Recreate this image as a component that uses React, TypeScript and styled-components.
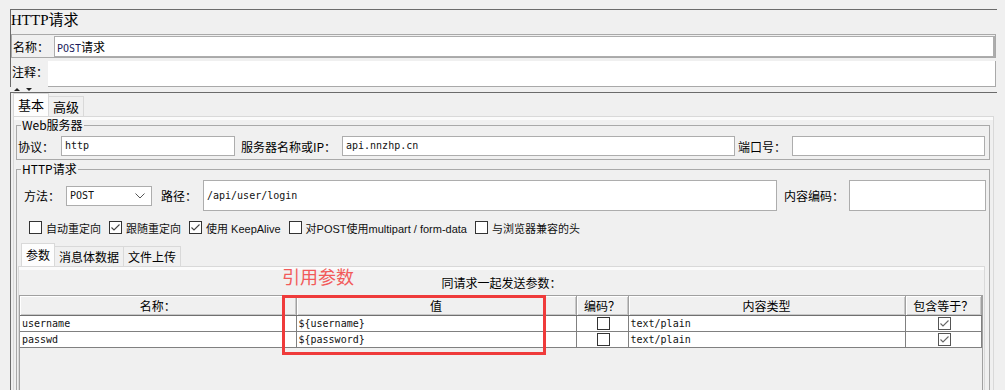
import React from 'react';
import styled, { createGlobalStyle } from 'styled-components';

const CJK = `'Noto Sans CJK SC', sans-serif`;
const SERIF = `'Liberation Serif', 'Noto Sans CJK SC', serif`;
const MONO = `'DejaVu Sans Mono', 'Noto Sans CJK SC', monospace`;
const UI = `'Liberation Sans', 'Noto Sans CJK SC', sans-serif`;

const GlobalStyle = createGlobalStyle`
  html, body {
    margin: 0;
    padding: 0;
    background: #f0f0f0;
  }
  body {
    width: 1005px;
    height: 390px;
    overflow: hidden;
    font-family: ${CJK};
    font-size: 12px;
    color: #000;
  }
`;

const Page = styled.div`
  padding: 9px 8px 0 10px;
`;

const TopPanel = styled.div`
  border-top: 1px solid #6b6b6b;
  border-left: 1px solid #6b6b6b;
`;

const Title = styled.div`
  height: 24px;
  line-height: 20px;
  font-family: ${SERIF};
  font-size: 15px;
`;

const NameRow = styled.div`
  display: flex;
  align-items: flex-start;
  height: 24px;
  box-sizing: border-box;
  border: 1px solid #a9a9a9;
  margin-right: 1px;
  padding-top: 1px;
`;

const RowLabel = styled.div<{ $w: number }>`
  flex: none;
  width: ${({ $w }) => $w}px;
  box-sizing: border-box;
  padding-left: 1px;
  line-height: 21px;
  font-size: 12px;
  white-space: nowrap;
`;

const NameInput = styled.div`
  flex: 1;
  height: 21px;
  box-sizing: border-box;
  border: 1px solid #adadad;
  border-right-width: 2px;
  background: #fff;
  padding-left: 2px;
  line-height: 19px;
  font-size: 12px;
`;

const MonoBit = styled.span`
  font-family: ${MONO};
  font-size: 10px;
  color: #1a1a5a;
`;

const CommentRow = styled.div`
  display: flex;
  height: 29px;
  padding-top: 3px;
  box-sizing: border-box;
  margin-right: 1px;
`;

const CommentArea = styled.div`
  flex: 1;
  background: #fff;
  border-right: 1px solid #a9a9a9;
  border-bottom: 1px solid #a9a9a9;
`;

const Divider = styled.div`
  height: 5px;
  display: flex;
  align-items: flex-start;
  gap: 6px;
  padding-left: 4px;
  overflow: hidden;
`;

const Arrow = styled.span<{ $up?: boolean }>`
  width: 0;
  height: 0;
  margin-top: 1px;
  border-left: 3px solid transparent;
  border-right: 3px solid transparent;
  ${({ $up }) => ($up ? 'border-bottom: 3px solid #222;' : 'border-top: 3px solid #222;')}
`;

const BottomPanel = styled.div`
  border-top: 1px solid #6b6b6b;
  border-left: 1px solid #6b6b6b;
  height: 300px;
`;

const TabBar = styled.div<{ $pad: number }>`
  display: flex;
  align-items: flex-end;
  padding-left: ${({ $pad }) => $pad}px;
`;

const Tab = styled.div<{ $active?: boolean; $size?: number }>`
  height: ${({ $active }) => ($active ? 22 : 19)}px;
  line-height: ${({ $active }) => ($active ? 22 : 19)}px;
  padding: 0 4px;
  font-size: ${({ $size }) => $size ?? 12}px;
  background: ${({ $active }) => ($active ? '#fdfdfd' : '#f0f0f0')};
  border: 1px solid #d9d9d9;
  border-bottom: none;
  margin-right: -1px;
  white-space: nowrap;
`;

const TabPanel = styled.div`
  margin: 0 3px 0 2px;
  border: 1px solid #d9d9d9;
  box-shadow: inset 0 3px 0 #fbfbfb;
  padding: 1px 3px 0 2px;
  height: 280px;
`;

const Group = styled.fieldset`
  margin: 0 0 2px 0;
  padding: 4px 4px 3px 1px;
  border: 1px solid #a9a9a9;
  min-width: 0;
`;

const Legend = styled.legend`
  margin-left: 3px;
  padding: 0 1px;
  line-height: 14px;
  font-size: 12px;
`;

const FieldRow = styled.div`
  display: flex;
  align-items: center;
`;

const FieldLabel = styled.div<{ $w: number; $pad?: number }>`
  flex: none;
  width: ${({ $w }) => $w}px;
  box-sizing: border-box;
  padding-left: ${({ $pad }) => $pad ?? 0}px;
  font-size: 12px;
  white-space: nowrap;
`;

const TextBox = styled.div<{ $w: number; $h: number }>`
  flex: none;
  width: ${({ $w }) => $w}px;
  height: ${({ $h }) => $h}px;
  box-sizing: border-box;
  background: #fff;
  border: 1px solid #adadad;
  padding-left: 3px;
  font-family: ${MONO};
  font-size: 10px;
  line-height: ${({ $h }) => $h - 2}px;
  color: #111;
`;

const SelectBox = styled(TextBox)`
  display: flex;
  justify-content: space-between;
  align-items: center;
  padding-right: 6px;
`;

const CheckRow = styled.div`
  display: flex;
  align-items: center;
  gap: 8px;
  margin-top: 10px;
  padding-left: 11px;
  height: 13px;
`;

const CheckItem = styled.label`
  display: flex;
  align-items: center;
  gap: 4px;
  font-family: ${UI};
  font-size: 11px;
  color: #111;
  white-space: nowrap;
`;

const Box = styled.span<{ $soft?: boolean }>`
  flex: none;
  display: inline-flex;
  align-items: center;
  justify-content: center;
  vertical-align: middle;
  width: 13px;
  height: 13px;
  box-sizing: border-box;
  border: 1px solid ${({ $soft }) => ($soft ? '#555' : '#333')};
  background: #fff;
`;

const SubTabs = styled(TabBar)`
  margin-top: 9px;
`;

const SubPanel = styled.div`
  position: relative;
  border: 1px solid #d9d9d9;
  box-shadow: inset 0 3px 0 #fbfbfb;
  height: 130px;
  padding-top: 9px;
  box-sizing: border-box;
`;

const Caption = styled.div`
  text-align: center;
  line-height: 14px;
  font-size: 12px;
  margin-bottom: 5px;
`;

const Pane = styled.div`
  margin-right: 1px;
  border-left: 1px solid #a0a0a0;
  border-right: 1px solid #a0a0a0;
  height: 100px;
`;

const Grid = styled.table`
  border-collapse: collapse;
  table-layout: fixed;
  width: 100%;
`;

const Head = styled.th`
  height: 19px;
  padding: 0;
  font-weight: normal;
  font-size: 12px;
  line-height: 18px;
  background: #f0f0f0;
  border-top: 1px solid #a0a0a0;
  border-right: 1px solid #a0a0a0;
  border-bottom: 1px solid #707070;
  box-shadow: inset 1px 1px 0 #fff, inset -1px -1px 0 #c8c8c8;
`;

const Cell = styled.td<{ $center?: boolean }>`
  height: 15px;
  padding: 0 0 0 2px;
  background: #fff;
  border-right: 1px solid #808080;
  border-bottom: 1px solid #808080;
  font-family: ${MONO};
  font-size: 10px;
  line-height: ${({ $center }) => ($center ? 0 : '15px')};
  color: #111;
  text-align: ${({ $center }) => ($center ? 'center' : 'left')};
  vertical-align: middle;
`;

const Note = styled.div`
  position: absolute;
  left: 263px;
  top: -2px;
  font-family: 'Noto Sans CJK SC', sans-serif;
  font-size: 18px;
  line-height: 22px;
  color: #f25a5a;
`;

const Highlight = styled.div`
  position: absolute;
  left: 263px;
  top: 28px;
  width: 264px;
  height: 60px;
  box-sizing: border-box;
  border: 3px solid #ef3b3b;
`;

const Tick = ({ color = '#555' }: { color?: string }) => (
  <svg width="11" height="11" viewBox="0 0 11 11">
    <polyline points="1.5,5.5 4,8 9.5,2.5" fill="none" stroke={color} strokeWidth="1.1" />
  </svg>
);

const Check = ({ checked, soft }: { checked?: boolean; soft?: boolean }) => (
  <Box $soft={soft}>{checked && <Tick color={soft ? '#666' : '#444'} />}</Box>
);

const Chevron = () => (
  <svg width="10" height="6" viewBox="0 0 10 6">
    <polyline points="0.5,0.5 5,5 9.5,0.5" fill="none" stroke="#555" strokeWidth="1" />
  </svg>
);

const params = [
  { name: 'username', value: '${username}' },
  { name: 'passwd', value: '${password}' },
];

const options = [
  { label: '自动重定向', checked: false },
  { label: '跟随重定向', checked: true },
  { label: '使用 KeepAlive', checked: true },
  { label: '对POST使用multipart / form-data', checked: false },
  { label: '与浏览器兼容的头', checked: false },
];

export default function App() {
  return (
    <>
      <GlobalStyle />
      <Page>
        <TopPanel>
          <Title>HTTP请求</Title>
          <NameRow>
            <RowLabel $w={42}>名称：</RowLabel>
            <NameInput>
              <MonoBit>POST</MonoBit>请求
            </NameInput>
          </NameRow>
          <CommentRow>
            <RowLabel $w={37}>注释：</RowLabel>
            <CommentArea />
          </CommentRow>
        </TopPanel>
        <Divider>
          <Arrow $up />
          <Arrow />
        </Divider>
        <BottomPanel>
          <TabBar $pad={2}>
            <Tab $active $size={13}>基本</Tab>
            <Tab $size={13}>高级</Tab>
          </TabBar>
          <TabPanel>
            <Group>
              <Legend>Web服务器</Legend>
              <FieldRow>
                <FieldLabel $w={43}>协议：</FieldLabel>
                <TextBox $w={174} $h={20}>http</TextBox>
                <FieldLabel $w={107} $pad={6}>服务器名称或IP：</FieldLabel>
                <TextBox $w={393} $h={20}>api.nnzhp.cn</TextBox>
                <FieldLabel $w={57} $pad={3}>端口号：</FieldLabel>
                <TextBox $w={193} $h={20} />
              </FieldRow>
            </Group>
            <Group>
              <Legend>HTTP请求</Legend>
              <FieldRow>
                <FieldLabel $w={48} $pad={6}>方法：</FieldLabel>
                <SelectBox $w={86} $h={20}>
                  POST
                  <Chevron />
                </SelectBox>
                <FieldLabel $w={51} $pad={9}>路径：</FieldLabel>
                <TextBox $w={574} $h={31}>/api/user/login</TextBox>
                <FieldLabel $w={72} $pad={7}>内容编码：</FieldLabel>
                <TextBox $w={137} $h={31} />
              </FieldRow>
              <CheckRow>
                {options.map((o) => (
                  <CheckItem key={o.label}>
                    <Check checked={o.checked} />
                    {o.label}
                  </CheckItem>
                ))}
              </CheckRow>
              <SubTabs $pad={3}>
                <Tab $active>参数</Tab>
                <Tab>消息体数据</Tab>
                <Tab>文件上传</Tab>
              </SubTabs>
              <SubPanel>
                <Caption>同请求一起发送参数：</Caption>
                <Pane>
                  <Grid>
                    <colgroup>
                      <col style={{ width: 276 }} />
                      <col style={{ width: 280 }} />
                      <col style={{ width: 52 }} />
                      <col style={{ width: 277 }} />
                      <col />
                    </colgroup>
                    <thead>
                      <tr>
                        <Head>名称：</Head>
                        <Head>值</Head>
                        <Head>编码？</Head>
                        <Head>内容类型</Head>
                        <Head>包含等于？</Head>
                      </tr>
                    </thead>
                    <tbody>
                      {params.map((p) => (
                        <tr key={p.name}>
                          <Cell>{p.name}</Cell>
                          <Cell>{p.value}</Cell>
                          <Cell $center>
                            <Check />
                          </Cell>
                          <Cell>text/plain</Cell>
                          <Cell $center>
                            <Check checked soft />
                          </Cell>
                        </tr>
                      ))}
                    </tbody>
                  </Grid>
                </Pane>
                <Note>引用参数</Note>
                <Highlight />
              </SubPanel>
            </Group>
          </TabPanel>
        </BottomPanel>
      </Page>
    </>
  );
}
